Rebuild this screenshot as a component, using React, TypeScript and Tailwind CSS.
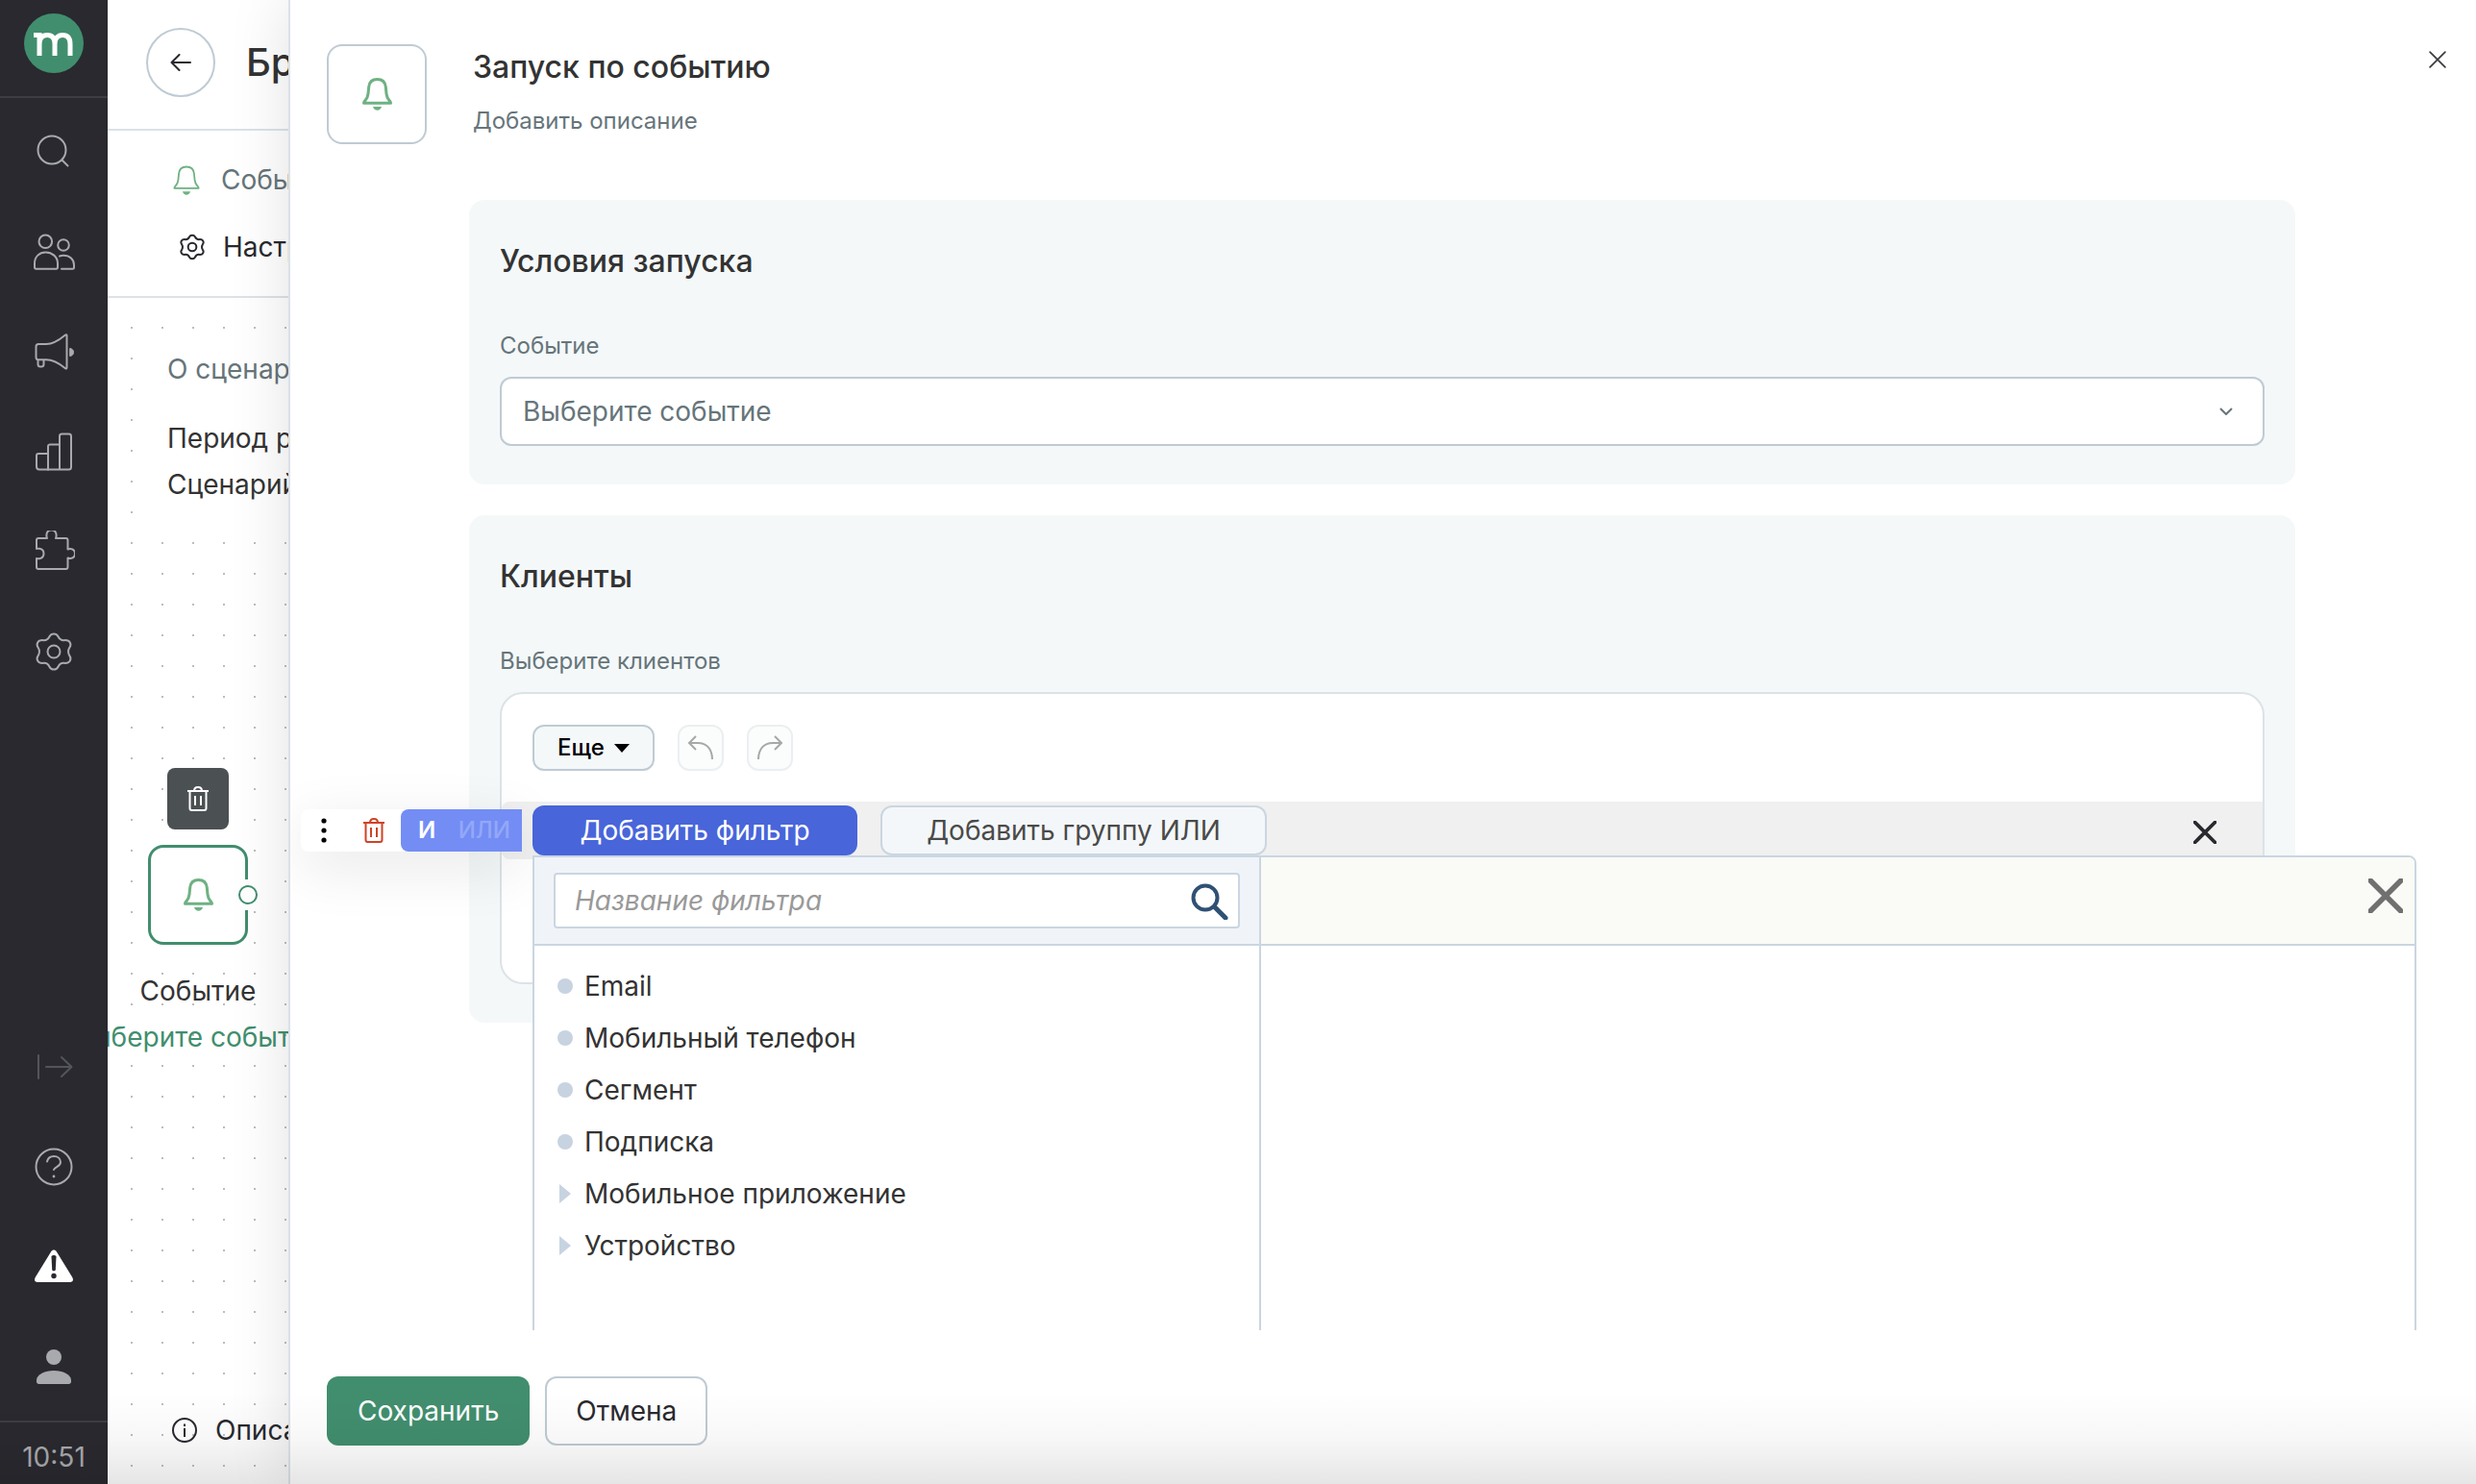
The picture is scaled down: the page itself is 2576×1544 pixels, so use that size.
import type { ReactNode } from "react";

const BELL =
  "M15.5 1.5c-5 0-8.3 3-8.8 8l-.7 7c-.3 3-1.3 5-3 7-1 1.2-1.5 1.7-1.5 2.7h28c0-1-.5-1.5-1.5-2.7-1.7-2-2.7-4-3-7l-.7-7c-.5-5-3.8-8-8.8-8z";

const GEAR =
  "M0-18.5c2.5 0 3.5.8 4.5 2.8c1.2 2.5 3 4 6 3.9c3-.3 5 0 6.2 2c1.5 2.5.8 4-.4 5.6c-1.5 2.5-1.5 5.9 0 8.4c1.2 1.6 1.9 3.1.4 5.6c-1.2 2-3.2 2.3-6.2 2c-3-.1-4.8 1.4-6 3.9c-1 2-2 2.8-4.5 2.8c-2.5 0-3.5-.8-4.5-2.8c-1.2-2.5-3-4-6-3.9c-3 .3-5 0-6.2-2c-1.5-2.5-.8-4 .4-5.6c1.5-2.5 1.5-5.9 0-8.4c-1.2-1.6-1.9-3.1-.4-5.6c1.2-2 3.2-2.3 6.2-2c3 .1 4.8-1.4 6-3.9c1-2 2-2.8 4.5-2.8z";

function Bell({ className, stroke = 3 }: { className: string; stroke?: number }) {
  return (
    <svg viewBox="0 0 31 34" className={className} fill="none" aria-hidden="true">
      <path d={BELL} stroke="currentColor" strokeWidth={stroke} strokeLinejoin="round" />
      <path d="M11 30h9c-.8 2.5-2.4 3.8-4.5 3.8S11.8 32.500 11 30z" fill="currentColor" />
    </svg>
  );
}

function Trash() {
  return (
    <svg viewBox="0 0 22 26" className="h-[26px] w-[22px]" fill="none" stroke="currentColor" strokeWidth="2" aria-hidden="true">
      <path d="M0 5h22M7 5c0-3 1.5-4 4-4s4 1 4 4M2.5 5v18c0 1.4.8 2 2 2h13c1.2 0 2-.6 2-2V5M8 10v10M14 10v10" />
    </svg>
  );
}

function Cross({ className, width }: { className: string; width: number }) {
  return (
    <svg viewBox="0 0 32 32" className={className} aria-hidden="true">
      <path d="M2 2l28 28M30 2L2 30" stroke="currentColor" strokeWidth={width} strokeLinecap="round" />
    </svg>
  );
}

// Sidebar icons share one 44px box and stroke width
function NavIcon({ children }: { children: ReactNode }) {
  return (
    <svg viewBox="0 0 44 44" className="h-11 w-11" fill="none" stroke="currentColor" strokeWidth="2" strokeLinecap="round" strokeLinejoin="round" aria-hidden="true">
      {children}
    </svg>
  );
}

const mainNav = [
  {
    label: "Поиск",
    icon: (
      <NavIcon>
        <circle cx="20" cy="20" r="14.5" />
        <path d="M30.5 30.5l6 6" />
      </NavIcon>
    ),
  },
  {
    label: "Клиенты",
    icon: (
      <NavIcon>
        <circle cx="13.3" cy="11.3" r="6.8" />
        <circle cx="32" cy="15" r="5.8" />
        <path d="M2 34c0-7 5-11.5 11.5-11.5S26 27 26 34v4c0 1.2-.5 1.7-1.6 1.7H3.600C2.500 39.700 2 39.200 2 38z" />
        <path d="M28 26.500c1.2-.5 2.5-.8 4-.8 6.500 0 11 4 11 10v2.500c0 1-.5 1.500-1.500 1.500H30" />
      </NavIcon>
    ),
  },
  {
    label: "Кампании",
    icon: (
      <NavIcon>
        <g transform="translate(1 0)">
          <path d="M5 14h8c8 0 14-4.500 20-9.500.8-.6 1.500-.3 1.500.6v33.500c0 .9-.7 1.200-1.500.6-6-5-12-9-20-9H5c-1.500 0-2.500-1-2.500-2.500V16.500C2.500 15 3.500 14 5 14z" />
          <path d="M4.500 31v4c0 1.500.8 2.500 2.500 2.500h1c1.700 0 2.500-1 2.500-2.500v-4" />
          <path d="M38 18.500c2.500.5 3.500 2 3.500 4s-1 3.500-3.500 4z" fill="currentColor" strokeWidth="1" />
        </g>
      </NavIcon>
    ),
  },
  {
    label: "Отчеты",
    icon: (
      <NavIcon>
        <g transform="translate(1.5 0)">
          <path d="M14.500 40.500H5.500c-1.700 0-3-1.200-3-3V26c0-1.200.8-2 2-2h10" />
          <path d="M14.500 40.500v-24c0-1.200.8-2 2-2h10" />
          <path d="M26.500 40.500V6c0-1.400 1-2.400 2.400-2.400h7.200c1.400 0 2.400 1 2.400 2.400v32c0 1.500-1 2.500-2.400 2.500H14.500" />
        </g>
      </NavIcon>
    ),
  },
  {
    label: "Интеграции",
    icon: (
      <NavIcon>
        <path transform="translate(1.5 -1)" d="M4.500 9h9c-.5-1-.8-2-.5-4 .3-3 2-4.500 5-4.500s4.700 1.500 5 4.500c.3 2 0 3-.5 4H33c1.200 0 2 .8 2 2v9.500c1-.5 2-.7 3-.5 3 .3 4.500 2.500 4.500 5s-1.500 4.700-4.500 5c-1 .2-2 0-3-.5V39c0 1.200-.8 2-2 2H4.500c-1.200 0-2-.8-2-2v-9c1 .3 1.800.5 3 .2 3-.5 4.500-2.500 4.500-5.200s-1.500-4.700-4.500-5.200c-1.200-.3-2 0-3 .2v-9c0-1.200.8-2 2-2z" />
      </NavIcon>
    ),
  },
  {
    label: "Настройки",
    icon: (
      <NavIcon>
        <path transform="translate(22 22)" d={GEAR} />
        <circle cx="22" cy="22" r="6.5" />
      </NavIcon>
    ),
  },
];

const bottomNav = [
  {
    label: "Развернуть меню",
    color: "text-[#54555a]",
    icon: (
      <NavIcon>
        <path d="M6 10v24M14 22h26M30 12l10.500 10L30 32" />
      </NavIcon>
    ),
  },
  {
    label: "Помощь",
    color: "text-[#a9aaad]",
    icon: (
      <NavIcon>
        <circle cx="22" cy="22" r="18.5" />
        <path d="M15 16.500c.8-3.500 3.300-5.500 7-5.500 4 0 7 2.500 7 6.300 0 4.700-6 4.700-7 7.700" />
        <circle cx="22" cy="32" r="1.4" fill="currentColor" stroke="none" />
      </NavIcon>
    ),
  },
  {
    label: "Предупреждения",
    color: "text-white",
    icon: (
      <NavIcon>
        <path d="M19 6.500L3 32.500c-2 3.300-.8 5.500 2.500 5.500h33c3.300 0 4.500-2.200 2.500-5.500L25 6.500c-1.600-2.600-4.400-2.600-6 0z" fill="currentColor" stroke="none" />
        <path d="M19.500 11.500c0-2 5-2 5 0L23.800 25c-.2 1.800-3.400 1.800-3.600 0z" fill="#29292f" stroke="none" />
        <circle cx="22" cy="31.5" r="2.7" fill="#29292f" stroke="none" />
      </NavIcon>
    ),
  },
  {
    label: "Профиль",
    color: "text-[#a9aaad]",
    icon: (
      <NavIcon>
        <g fill="currentColor" stroke="none">
          <circle cx="22" cy="12" r="8" />
          <path d="M4 36v1.500C4 39 5 40 6.500 40h31c1.500 0 2.500-1 2.500-2.500V36c0-6-9-10-18-10S4 30 4 36z" />
        </g>
      </NavIcon>
    ),
  },
];

const filters = [
  { name: "Email", group: false },
  { name: "Мобильный телефон", group: false },
  { name: "Сегмент", group: false },
  { name: "Подписка", group: false },
  { name: "Мобильное приложение", group: true },
  { name: "Устройство", group: true },
];

function Sidebar() {
  return (
    <aside className="relative z-20 flex w-28 shrink-0 flex-col bg-[#29292f]">
      <div className="flex h-[102px] justify-center border-b-2 border-[#3d3d43] pt-[14px]">
        <svg viewBox="25 14 62 62" className="h-[62px] w-[62px]" fill="none" aria-label="Логотип">
          <circle cx="56" cy="45" r="31" fill="#418e6e" />
          <path d="M35 36.500h6V58M41 46c0-6 3-9.500 8.200-9.500S57 40 57 46v12M57 46c0-6 3-9.500 8.200-9.500S73 40 73 46v12" stroke="#fff" strokeWidth="5" />
        </svg>
      </div>
      <nav className="flex flex-1 flex-col justify-between py-1">
        <div>
          {mainNav.map((item) => (
            <button key={item.label} aria-label={item.label} className="flex h-[104px] w-full items-center justify-center text-[#a9aaad]">
              {item.icon}
            </button>
          ))}
        </div>
        <div>
          {bottomNav.map((item) => (
            <button key={item.label} aria-label={item.label} className={`flex h-[104px] w-full items-center justify-center ${item.color}`}>
              {item.icon}
            </button>
          ))}
        </div>
      </nav>
      <div className="flex h-[66px] items-start justify-center border-t-2 border-[#3d3d43] pt-4 text-[28px] leading-10 text-[#a9aaad]">
        10:51
      </div>
    </aside>
  );
}

function ScenarioPage() {
  return (
    <main className="flex w-[188px] shrink-0 flex-col overflow-hidden bg-white text-[28px] whitespace-nowrap text-[#333]">
      <header className="flex h-[136px] shrink-0 items-center gap-8 border-b-2 border-[#dbe2e8] pb-1 pl-10">
        <button aria-label="Назад" className="flex h-[72px] w-[72px] shrink-0 items-center justify-center rounded-full border-2 border-[#bfcbd4]">
          <svg viewBox="0 0 22 18" className="h-[18px] w-[22px]" fill="none" stroke="#29292f" strokeWidth="2" strokeLinecap="round" strokeLinejoin="round" aria-hidden="true">
            <path d="M21 9H1.500M9.500 1L1.500 9l8 8" />
          </svg>
        </button>
        <h1 className="text-[40px] leading-[48px] font-medium">Брошенная</h1>
      </header>

      <div className="shrink-0 border-b-2 border-[#dbe2e8] py-4">
        <div className="flex h-[70px] items-center gap-[22px] pl-[68px] text-[#66757a]">
          <Bell className="h-[31px] w-7 shrink-0 text-[#6fb182]" stroke={2} />
          Событие
        </div>
        <button className="flex h-[70px] items-center gap-[18px] pl-[74px] text-[#29292f]">
          <svg viewBox="-21 -21 42 42" className="h-7 w-7 shrink-0" fill="none" stroke="currentColor" strokeWidth="3" aria-hidden="true">
            <path d={GEAR} />
            <circle r="6.5" />
          </svg>
          Настройки
        </button>
      </div>

      {/* Canvas */}
      <div className="relative flex-1 overflow-hidden bg-[radial-gradient(circle_at_1px_1px,#bdbdbd_1px,transparent_1px)] bg-[size:32px_32px] bg-[position:24px_30px]">
        <section className="absolute top-[34px] left-8 bg-white pt-4 pr-8 pb-8 pl-[30px] leading-[48px]">
          <h2 className="mb-6 text-[#66757a]">О сценарии</h2>
          <p>Период работы</p>
          <p>Сценарий запущен</p>
        </section>

        <div className="absolute top-[489px] left-[94px] flex w-0 flex-col items-center">
          <button aria-label="Удалить" className="mb-4 flex h-16 w-16 items-center justify-center rounded-lg bg-[#4b5053] text-white">
            <Trash />
          </button>
          <div className="relative flex h-[104px] w-[104px] items-center justify-center rounded-2xl border-3 border-[#418e6e] bg-white">
            <Bell className="h-[34px] w-[31px] text-[#6fb182]" />
            <span className="absolute -right-[13px] flex h-8 items-center bg-white">
              <span className="h-5 w-5 rounded-full border-2 border-[#418e6e] bg-white" />
            </span>
          </div>
          <div className="mt-6 text-center leading-[48px]">
            <p>Событие</p>
            <p className="text-[#418e6e]">Выберите событие</p>
          </div>
        </div>

        <button className="absolute bottom-8 left-[66px] flex h-12 items-center gap-[18px] text-[#29292f]">
          <svg viewBox="0 0 28 28" className="h-7 w-7" fill="none" stroke="currentColor" strokeWidth="2" aria-hidden="true">
            <circle cx="14" cy="14" r="12" />
            <path d="M14 12v9M14 7.500v2.500" />
          </svg>
          Описание
        </button>
      </div>
    </main>
  );
}

function FilterPopup() {
  return (
    <div className="absolute top-14 -right-40 left-8 z-20 flex h-[640px] rounded-r-lg border-2 border-[#cad6e1] bg-white">
      <div className="flex w-[756px] shrink-0 flex-col border-r-2 border-[#cad6e1]">
        <div className="border-b-2 border-[#cad6e1] bg-[#f0f4f8] px-5 py-4">
          <div className="flex h-[58px] items-center rounded border-2 border-[#cad6e1] bg-white pr-[10px] pl-5">
            <input
              type="text"
              aria-label="Название фильтра"
              placeholder="Название фильтра"
              className="h-full min-w-0 flex-1 text-[28px] italic outline-none placeholder:text-[#999]"
            />
            <svg viewBox="0 0 40 40" className="h-10 w-10" fill="none" stroke="#2f5174" aria-hidden="true">
              <circle cx="16" cy="17" r="12.5" strokeWidth="4" />
              <path d="M25.500 26.500L37 38" strokeWidth="5" strokeLinecap="round" />
            </svg>
          </div>
        </div>
        <ul className="px-6 pt-[15px] text-[28px] leading-[54px] text-[#333]">
          {filters.map((filter) => (
            <li key={filter.name} className="flex items-center gap-3">
              {filter.group ? (
                <svg viewBox="0 0 16 20" className="h-5 w-4" fill="#c7d3e0" aria-hidden="true">
                  <path d="M2 0l12 10L2 20z" />
                </svg>
              ) : (
                <span className="h-4 w-4 rounded-full bg-[#c7d3e0]" />
              )}
              {filter.name}
            </li>
          ))}
        </ul>
      </div>
      <div className="flex-1">
        <div className="flex h-[92px] items-start justify-end rounded-tr-md border-b-2 border-[#cad6e1] bg-[#fafbf6] pt-[22px] pr-3">
          <button aria-label="Закрыть фильтры" className="text-[#707070]">
            <Cross className="h-9 w-9" width={5} />
          </button>
        </div>
      </div>
    </div>
  );
}

function ConditionRow() {
  return (
    <div className="relative flex h-[60px] items-center gap-6 rounded-l-lg bg-[#f0f0f0] px-8">
      <div className="absolute top-2 -left-[209px] z-10 flex h-11 w-[230px] gap-1 rounded-lg bg-white/40 shadow-[0_16px_60px_rgba(0,0,0,0.1)]">
        <button aria-label="Действия" className="flex w-12 items-center justify-center rounded-lg bg-white">
          <svg viewBox="0 0 6 26" className="h-[26px] w-[6px]" aria-hidden="true">
            <circle cx="3" cy="3" r="2.6" />
            <circle cx="3" cy="13" r="2.6" />
            <circle cx="3" cy="23" r="2.6" />
          </svg>
        </button>
        <button aria-label="Удалить условие" className="flex w-12 items-center justify-center rounded-lg bg-white/60 text-[#cf4326]">
          <Trash />
        </button>
        <div className="flex flex-1 items-center justify-between rounded-l-lg bg-[#738df5] pr-3 pl-[18px] text-[24px] leading-8 font-semibold">
          <button className="text-white">И</button>
          <button className="font-medium text-[#93a8f8]">ИЛИ</button>
        </div>
      </div>

      <button className="z-10 h-[52px] w-[338px] rounded-xl bg-[#4865da] text-[28px] leading-10 text-white">Добавить фильтр</button>
      <button className="h-[52px] w-[402px] rounded-xl border-2 border-[#cad6e1] bg-[#f4f7f9] text-[28px] leading-10 text-[#4a4a4a]">
        Добавить группу ИЛИ
      </button>
      <button aria-label="Очистить" className="ml-auto flex w-14 justify-center pt-1 text-[#29292f]">
        <Cross className="h-6 w-6" width={5} />
      </button>

      <FilterPopup />
    </div>
  );
}

function EventDrawer() {
  return (
    <div role="dialog" aria-label="Запуск по событию" className="relative z-10 flex min-w-0 flex-1 flex-col border-l-2 border-[#dbe2e8] bg-white shadow-[0_0_60px_rgba(0,0,0,0.12)]">
      <div className="min-h-0 flex-1 overflow-hidden">
        <header className="flex items-start gap-12 pt-[46px] pr-6 pl-[38px]">
          <div className="flex h-[104px] w-[104px] items-center justify-center rounded-2xl border-2 border-[#bfcbd4]">
            <Bell className="h-[34px] w-[31px] text-[#6fb182]" />
          </div>
          <div className="flex-1 pt-1">
            <h2 className="text-[32px] leading-10 font-medium text-[#333]">Запуск по событию</h2>
            <p className="mt-5 text-[24px] leading-8 text-[#66757a]">Добавить описание</p>
          </div>
          <button aria-label="Закрыть" className="flex h-8 w-8 items-center justify-center text-[#3a3a3f]">
            <Cross className="h-[18px] w-[18px]" width={3} />
          </button>
        </header>

        <div className="mt-[58px] flex flex-col gap-8 pr-[188px] pl-[186px]">
          <section className="rounded-2xl bg-[#f4f8f9] px-8 pt-11 pb-10">
            <h3 className="mb-[50px] text-[32px] leading-10 font-medium text-[#333]">Условия запуска</h3>
            <label htmlFor="event" className="mb-[14px] block text-[24px] leading-9 text-[#66757a]">
              Событие
            </label>
            <div className="relative">
              <select id="event" className="block h-[72px] w-full appearance-none rounded-xl border-2 border-[#bfcbd4] bg-white px-[22px] text-[28px] text-[#66757a]">
                <option>Выберите событие</option>
              </select>
              <svg viewBox="0 0 14 8" className="pointer-events-none absolute top-8 right-[33px] h-2 w-[14px]" fill="none" stroke="#66757a" strokeWidth="2" aria-hidden="true">
                <path d="M1 1l6 6 6-6" />
              </svg>
            </div>
          </section>

          <section className="rounded-2xl bg-[#f4f8f9] px-8 pt-11 pb-10">
            <h3 className="mb-[50px] text-[32px] leading-10 font-medium text-[#333]">Клиенты</h3>
            <p className="mb-[14px] text-[24px] leading-9 text-[#66757a]">Выберите клиентов</p>
            <div className="rounded-3xl border-2 border-[#dbe3e7] bg-white pt-8 pb-32">
              <div className="mb-8 flex gap-6 px-8">
                <button className="flex h-12 items-center gap-[10px] rounded-xl border-2 border-[#bfcbd4] bg-[#f4f8f9] px-6 text-[24px] font-medium text-black">
                  Еще
                  <svg viewBox="0 0 16 9" className="h-[9px] w-4" aria-hidden="true">
                    <path d="M0 0h16L8 9z" />
                  </svg>
                </button>
                <button aria-label="Отменить действие" className="flex h-12 w-12 items-center justify-center rounded-xl border-2 border-[#ebeff1] bg-[#fbfcfc]">
                  <svg viewBox="0 0 28 26" className="h-[26px] w-7" fill="none" stroke="#a5a8a9" strokeWidth="2" aria-hidden="true">
                    <path d="M1.500 8H11c9 0 15 6 15 17M9 1L2 8l7 7" />
                  </svg>
                </button>
                <button aria-label="Повторить действие" className="flex h-12 w-12 items-center justify-center rounded-xl border-2 border-[#ebeff1] bg-[#fbfcfc]">
                  <svg viewBox="0 0 28 26" className="h-[26px] w-7" fill="none" stroke="#a5a8a9" strokeWidth="2" aria-hidden="true">
                    <path d="M26.500 8H17C8 8 2 14 2 25M19 1l7 7-7 7" />
                  </svg>
                </button>
              </div>
              <ConditionRow />
            </div>
          </section>
        </div>
      </div>

      <footer className="flex gap-4 pt-12 pb-10 pl-[38px] text-[28px] leading-10">
        <button className="h-[72px] rounded-xl bg-[#418e6e] px-8 text-white">Сохранить</button>
        <button className="h-[72px] rounded-xl border-2 border-[#bfcbd4] px-[30px] text-[#29292f]">Отмена</button>
      </footer>
    </div>
  );
}

export default function App() {
  return (
    <div className="relative flex h-screen overflow-hidden bg-white font-['Inter',sans-serif]">
      <Sidebar />
      <ScenarioPage />
      <EventDrawer />
      {/* Shade along the bottom edge of the window */}
      <div className="pointer-events-none absolute inset-x-0 bottom-0 z-30 h-24 bg-linear-to-t from-black/10 via-black/3 to-transparent" />
    </div>
  );
}
